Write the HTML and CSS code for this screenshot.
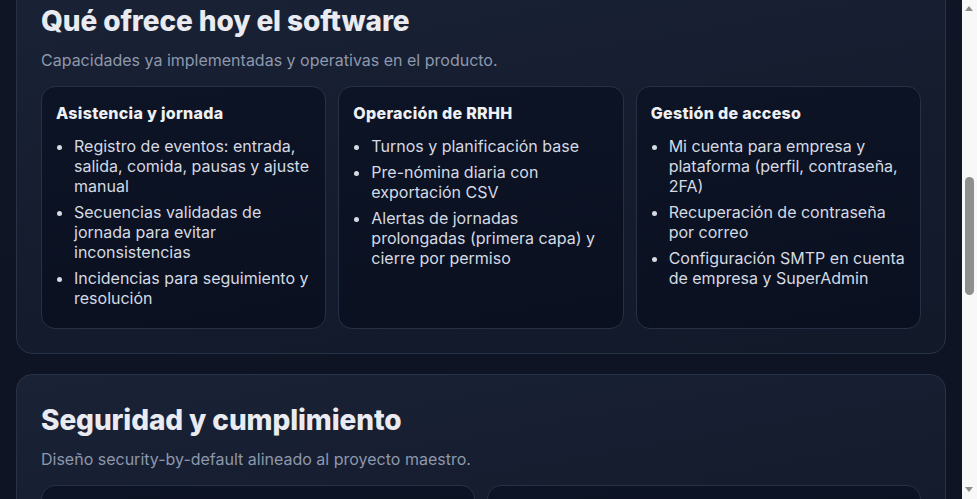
FILE: index.html
```html
<!DOCTYPE html>
<html lang="es">
<head>
	<meta charset="UTF-8">
	<title>Producto</title>
	<link rel="stylesheet" href="styles.css">
</head>
<body>
	<header class="hero">
		<h1>Control horario y RRHH</h1>
		<p class="lead">Registro de jornada, turnos y pre-nómina en una sola plataforma.</p>
	</header>

	<section class="block">
		<h2>Qué ofrece hoy el software</h2>
		<p class="sub">Capacidades ya implementadas y operativas en el producto.</p>
		<div class="cards three">
			<div class="card">
				<h3>Asistencia y jornada</h3>
				<ul>
					<li>Registro de eventos: entrada, salida, comida, pausas y ajuste manual</li>
					<li>Secuencias validadas de jornada para evitar inconsistencias</li>
					<li>Incidencias para seguimiento y resolución</li>
				</ul>
			</div>
			<div class="card">
				<h3>Operación de RRHH</h3>
				<ul>
					<li>Turnos y planificación base</li>
					<li>Pre-nómina diaria con exportación CSV</li>
					<li>Alertas de jornadas prolongadas (primera capa) y cierre por permiso</li>
				</ul>
			</div>
			<div class="card">
				<h3>Gestión de acceso</h3>
				<ul>
					<li>Mi cuenta para empresa y plataforma (perfil, contraseña, 2FA)</li>
					<li>Recuperación de contraseña por correo</li>
					<li>Configuración SMTP en cuenta de empresa y SuperAdmin</li>
				</ul>
			</div>
		</div>
	</section>

	<section class="block">
		<h2>Seguridad y cumplimiento</h2>
		<p class="sub">Diseño security-by-default alineado al proyecto maestro.</p>
		<div class="cards two">
			<div class="card">
				<h3>Protección de datos</h3>
				<ul>
					<li>Contraseñas con hash y doble factor opcional</li>
					<li>Sesiones con expiración y cierre seguro</li>
					<li>Permisos por rol en cada módulo</li>
				</ul>
			</div>
			<div class="card">
				<h3>Trazabilidad</h3>
				<ul>
					<li>Registro de cambios sobre fichajes y ajustes</li>
					<li>Historial de accesos por usuario</li>
					<li>Exportaciones listas para inspección</li>
				</ul>
			</div>
		</div>
	</section>

	<section class="block">
		<h2>Próximas fases</h2>
		<p class="sub">Líneas de trabajo previstas en la hoja de ruta.</p>
		<div class="cards two">
			<div class="card">
				<h3>Informes</h3>
				<ul>
					<li>Cuadros de mando por centro y departamento</li>
					<li>Resumen mensual de horas</li>
				</ul>
			</div>
			<div class="card">
				<h3>Integraciones</h3>
				<ul>
					<li>Conectores con software de nómina</li>
					<li>API para sistemas externos</li>
				</ul>
			</div>
		</div>
	</section>

	<footer class="foot">© Control horario</footer>

	<!-- barra de desplazamiento clásica -->
	<div class="scrollbar">
		<span class="arrow up"></span>
		<span class="thumb"></span>
		<span class="arrow down"></span>
	</div>

	<script>
		// abrir la página en la sección de capacidades
		var oFirst = document.querySelectorAll('.block')[0];
		window.scrollTo(0, oFirst.offsetTop + 25);
	</script>
</body>
</html>
```

FILE: styles.css
```css
html{
	background: #0d1321;
}
body{
	margin: 0;
	padding: 0 31px 260px 16px;
	font-family: Inter, "Noto Sans", sans-serif;
	color: #d6dbe4;
	background: linear-gradient(180deg, #111829 0%, #0c1120 100%);
}

.hero{
	min-height: 560px;
	padding: 80px 24px 0;
	margin-bottom: 110px;
}
.hero h1{
	margin: 0 0 12px;
	font-size: 44px;
	font-weight: 800;
	color: #eef0f5;
}
.lead{
	margin: 0;
	font-size: 18px;
	color: #8e9ab0;
}

.block{
	border: 1px solid #283246;
	border-radius: 16px;
	padding: 28px 24px 24px;
	margin-bottom: 20px;
	background: linear-gradient(170deg, #1a2236 0%, #151c2e 55%, #121929 100%);
}
.block h2{
	margin: 0 0 10px;
	font-size: 28px;
	line-height: 34px;
	font-weight: 800;
	letter-spacing: -0.1px;
	color: #e9ebf1;
}
.sub{
	margin: 0 0 14px;
	font-size: 16px;
	line-height: 24px;
	color: #8d98ad;
}

.cards{
	display: grid;
	gap: 12px;
}
.three{
	grid-template-columns: repeat(3, 1fr);
}
.two{
	grid-template-columns: repeat(2, 1fr);
}

.card{
	border: 1px solid #263146;
	border-radius: 14px;
	padding: 15px 14px 20px;
	background: linear-gradient(170deg, #0d1425 0%, #0a1020 100%);
}
.card h3{
	margin: 0 0 12px;
	font-size: 16px;
	line-height: 22px;
	font-weight: 800;
	letter-spacing: 0.3px;
	color: #eef0f4;
}
.card ul{
	margin: 0;
	padding-left: 18px;
}
.card li{
	font-size: 16px;
	line-height: 20px;
	margin-bottom: 6px;
	color: #d5dae3;
}
.card li:last-child{
	margin-bottom: 0;
}

.foot{
	padding: 30px 24px;
	font-size: 14px;
	color: #6c7890;
}

.scrollbar{
	position: fixed;
	top: 0;
	right: 0;
	width: 15px;
	height: 100vh;
	background: #f8f8f8;
}
.thumb{
	position: absolute;
	left: 3px;
	top: 177px;
	width: 9px;
	height: 118px;
	border-radius: 5px;
	background: #8f8f8f;
}
.arrow{
	position: absolute;
	left: 3px;
	width: 0;
	height: 0;
	border-left: 4.5px solid transparent;
	border-right: 4.5px solid transparent;
}
.up{
	top: 6px;
	border-bottom: 5px solid #8f8f8f;
}
.down{
	bottom: 7px;
	border-top: 5px solid #8f8f8f;
}
```
